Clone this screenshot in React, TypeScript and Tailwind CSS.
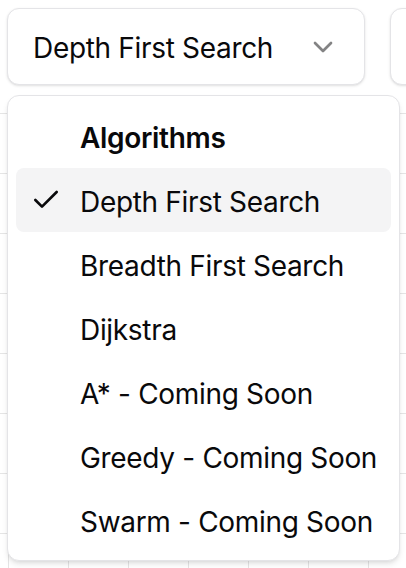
import { Check, ChevronDown } from "lucide-react";

const items = [
  "Depth First Search",
  "Breadth First Search",
  "Dijkstra",
  "A* - Coming Soon",
  "Greedy - Coming Soon",
  "Swarm - Coming Soon",
];

export default function App() {
  const cells = Array.from({ length: 64 });
  return (
    <div className="relative w-[406px] h-[568px] overflow-hidden bg-white text-[#09090b] font-['Inter','Noto_Sans',sans-serif] tracking-[-0.02em]">
      <div className="flex gap-[25px] pl-[7px] pt-[8px]">
        <div className="flex h-[77px] w-[358px] shrink-0 items-center justify-between rounded-[12px] border border-[#e4e4e7] bg-white pl-[25px] pr-[25px] text-[28px] leading-[40px] shadow-sm">
          <span className="mt-[3px]">Depth First Search</span>
          <ChevronDown size={32} strokeWidth={2} className="opacity-50" />
        </div>
        <div className="h-[77px] w-[80px] shrink-0 rounded-[12px] border border-[#e4e4e7] bg-white shadow-sm" />
      </div>
      <div className="-ml-[52px] mt-[28px] grid grid-cols-[repeat(8,60px)]">
        {cells.map((_, i) => (
          <div key={i} className="h-[60px] border-l border-t border-[#e5e5e5]" />
        ))}
      </div>
      <div className="absolute left-[7px] top-[95px] w-[393px] rounded-[12px] border border-[#e4e4e7] bg-white p-[8px] shadow-md">
        <div className="flex h-[64px] items-center pl-[64px] text-[28px] font-semibold leading-[40px]">
          <span className="mt-[3px]">Algorithms</span>
        </div>
        {items.map((it, i) => (
          <div
            key={it}
            className={
              i === 0
                ? "relative flex h-[64px] items-center rounded-[8px] bg-[#f4f4f5] pl-[64px] text-[28px] leading-[40px]"
                : "relative flex h-[64px] items-center rounded-[8px] pl-[64px] text-[28px] leading-[40px]"
            }
          >
            {i === 0 && (
              <span className="absolute left-[14px] top-[16px] flex h-[32px] w-[32px] items-center justify-center">
                <Check size={32} strokeWidth={2} />
              </span>
            )}
            <span className="mt-[3px]">{it}</span>
          </div>
        ))}
      </div>
    </div>
  );
}
